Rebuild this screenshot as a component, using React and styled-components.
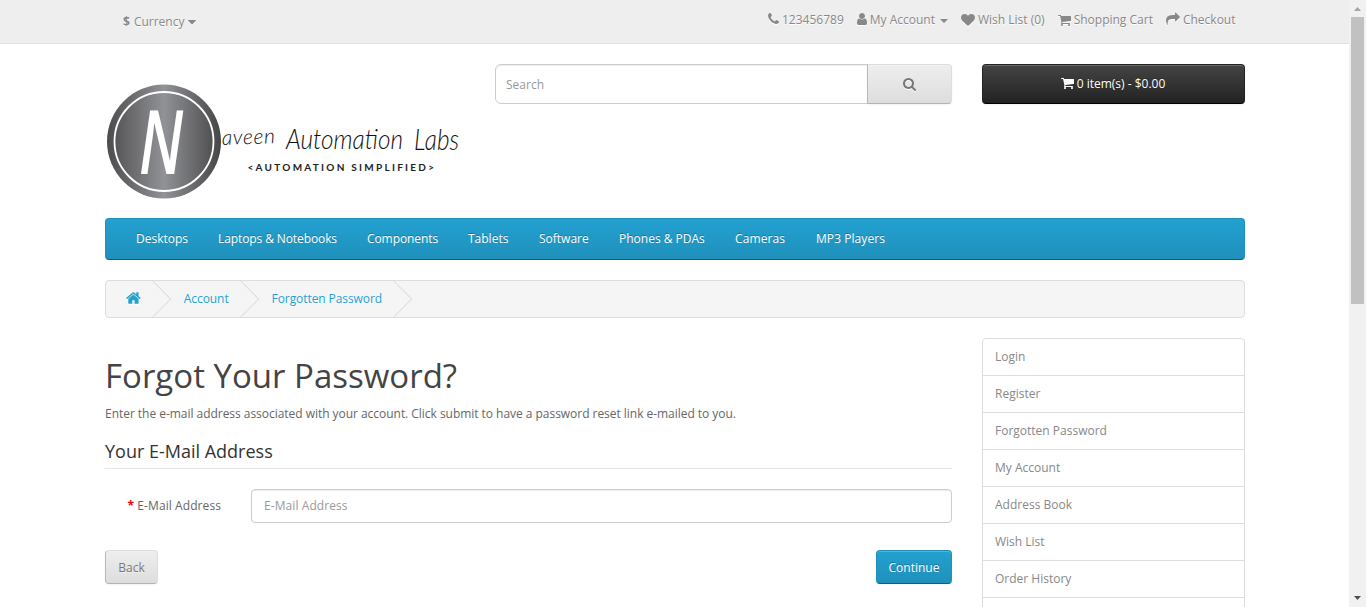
import React from 'react';
import styled, { createGlobalStyle, css } from 'styled-components';

const GlobalStyle = createGlobalStyle`
  *, *::before, *::after { box-sizing: border-box; }
  html, body { margin: 0; padding: 0; height: 100%; overflow: hidden; }
  body {
    font-family: 'Open Sans', sans-serif;
    font-weight: 400;
    font-size: 12px;
    line-height: 20px;
    color: #666;
    background: #fff;
  }
  input, button { font-family: inherit; }
`;

const icons = {
  phone: 'M1600 1240q0 27-10 70.5t-21 68.5q-21 50-122 106-94 51-186 51-27 0-53-3.5t-57.5-12.5-47-14.5-55.5-20.5-49-18q-98-35-175-83-127-79-264-216t-216-264q-48-77-83-175-3-9-18-49t-20.5-55.5-14.5-47-12.5-57.5-3.5-53q0-92 51-186 56-101 106-122 25-11 68.5-21t70.5-10q14 0 21 3 18 6 53 76 11 19 30 54t35 63.5 31 53.5q3 4 17.5 25t21.5 35.5 7 28.5q0 20-28.5 50t-62 55-62 53-28.5 46q0 9 5 22.5t8.5 20.5 14 24 11.5 19q76 137 174 235t235 174q2 1 19 11.5t24 14 20.5 8.5 22.5 5q18 0 46-28.5t53-62 55-62 50-28.5q14 0 28.5 7t35.5 21.5 25 17.5q25 15 53.5 31t63.5 35 54 30q70 35 76 53 3 7 3 21z',
  user: 'M1536 1399q0 109-62.5 187t-150.5 78h-854q-88 0-150.5-78t-62.5-187q0-85 8.5-160.5t31.5-152 58.5-131 94-89 134.5-34.5q131 128 313 128t313-128q76 0 134.5 34.5t94 89 58.5 131 31.5 152 8.5 160.5zm-256-887q0 159-112.5 271.5t-271.5 112.5-271.5-112.5-112.5-271.5 112.5-271.5 271.5-112.5 271.5 112.5 112.5 271.5z',
  heart: 'M896 1664q-26 0-44-18l-624-602q-10-8-27.5-26t-55.5-65.5-68-97.5-53.5-121-23.5-138q0-220 127-344t351-124q62 0 126.5 21.5t120 58 95.5 68.5 76 68q36-36 76-68t95.5-68.5 120-58 126.5-21.5q224 0 351 124t127 344q0 221-229 450l-623 600q-18 18-44 18z',
  cart: 'M704 1536q0 52-38 90t-90 38-90-38-38-90 38-90 90-38 90 38 38 90zm896 0q0 52-38 90t-90 38-90-38-38-90 38-90 90-38 90 38 38 90zm128-1088v512q0 24-16.5 42.5t-40.5 21.5l-1044 122q13 60 13 70 0 16-24 64h920q26 0 45 19t19 45-19 45-45 19h-1024q-26 0-45-19t-19-45q0-11 8-31.5t16-36 21.5-40 15.5-29.5l-177-823h-204q-26 0-45-19t-19-45 19-45 45-19h256q16 0 28.5 6.5t19.5 15.5 13 24.5 8 26 5.5 29.5 4.5 26h1201q26 0 45 19t19 45z',
  share: 'M1792 640q0 26-19 45l-512 512q-19 19-45 19t-45-19-19-45v-256h-224q-98 0-175.5 6t-154 21.5-133 42.5-105.5 69.5-80 101-48.5 138.5-17.5 181q0 55 5 123 0 6 2.5 23.5t2.5 26.5q0 15-8.5 25t-23.5 10q-16 0-28-17-7-9-13-22t-13.5-30-10.5-24q-127-285-127-451 0-199 53-333 162-403 875-403h224v-256q0-26 19-45t45-19 45 19l512 512q19 19 19 45z',
  search: 'M1216 832q0-185-131.5-316.5t-316.5-131.5-316.5 131.5-131.5 316.5 131.5 316.5 316.5 131.5 316.5-131.5 131.5-316.5zm512 832q0 52-38 90t-90 38q-54 0-90-38l-343-342q-179 124-399 124-143 0-273.5-55.5t-225-150-150-225-55.5-273.5 55.5-273.5 150-225 225-150 273.5-55.5 273.5 55.5 225 150 150 225 55.5 273.5q0 220-124 399l343 343q37 37 37 90z',
  home: 'M1472 992v480q0 26-19 45t-45 19h-384v-384h-256v384h-384q-26 0-45-19t-19-45v-480q0-1 .5-3t.5-3l575-474 575 474q1 2 1 6zm223-69l-62 74q-8 9-21 11h-3q-13 0-21-7l-692-577-692 577q-12 8-24 7-13-2-21-11l-62-74q-8-10-7-23.5t11-21.5l719-599q32-26 76-26t76 26l244 204v-195q0-14 9-23t23-9h192q14 0 23 9t9 23v408l219 182q10 8 11 21.5t-7 23.5z',
  caret: 'M1408 704q0 26-19 45l-448 448q-19 19-45 19t-45-19l-448-448q-19-19-19-45t19-45 45-19h896q26 0 45 19t19 45z',
};

const Svg = styled.svg`
  display: block;
  flex: none;
  height: ${(p) => p.$size}px;
  width: ${(p) => p.$w}px;
  margin-bottom: ${(p) => p.$lift || 0}px;
  fill: currentColor;
  filter: ${(p) => (p.$shadow ? 'drop-shadow(0 1px 0 #fff)' : 'none')};
`;

/* box = [left, width] of the glyph inside the 1792-unit em square */
function Icon({ name, size = 14, box = [0, 1792], shadow, lift }) {
  return (
    <Svg
      $size={size}
      $w={(size * box[1]) / 1792}
      $shadow={shadow}
      $lift={lift}
      viewBox={`${box[0]} 0 ${box[1]} 1792`}
      aria-hidden="true"
    >
      <path d={icons[name]} />
    </Svg>
  );
}

const Shell = styled.div`
  display: flex;
  height: 607px;
  overflow: hidden;
`;

const Page = styled.div`
  flex: 1;
  min-width: 0;
`;

const Container = styled.div`
  width: 1140px;
  margin: 0 104px 0 105px;
`;

const TopBar = styled.nav`
  display: flex;
  height: 44px;
  background: #eee;
  border-bottom: 1px solid #e2e2e2;
  margin-bottom: 20px;
  color: #888;
  text-shadow: 0 1px 0 #fff;
`;

const TopInner = styled(Container)`
  display: flex;
  justify-content: space-between;
  align-items: flex-start;
`;

const Currency = styled.div`
  display: flex;
  align-items: center;
  padding: 12px 0 0 18px;
  gap: 4px;
`;

const TopLinks = styled.ul`
  display: flex;
  list-style: none;
  margin: 0;
  padding: 10px 9.5px 0 0;
`;

const TopLink = styled.li`
  display: flex;
  align-items: center;
  gap: 3px;
  margin-left: 13px;
  white-space: nowrap;
`;

const Caret = styled.span`
  margin-left: 2px;
  margin-top: 2px;
  border-top: 4px solid currentColor;
  border-left: 4px solid transparent;
  border-right: 4px solid transparent;
`;

const Header = styled.header`
  display: flex;
  height: 154px;
`;

const LogoCell = styled.div`
  width: 390px;
  padding: 12px 30px 0 0;
`;

const LogoArt = styled.svg`
  display: block;
  width: 360px;
  height: 128px;
  overflow: visible;
`;

const SearchBox = styled.div`
  display: flex;
  width: 457px;
  height: 40px;
  margin-right: 30px;
`;

const Field = styled.input`
  flex: 1;
  min-width: 0;
  font-size: 12px;
  color: #555;
  background: #fff;
  border: 1px solid #ccc;
  box-shadow: inset 0 1px 1px rgba(0, 0, 0, 0.075);
  outline: none;
  &::placeholder { color: #999; opacity: 1; }
  ${(p) =>
    p.$joined
      ? css`
          height: 40px;
          padding: 0 10px;
          border-radius: 6px 0 0 6px;
        `
      : css`
          height: 34px;
          padding: 5px 12px 7px;
          letter-spacing: 0.08px;
          border-radius: 4px;
        `}
`;

const tones = {
  plain: css`
    color: #777;
    text-shadow: 0 1px 0 rgba(255, 255, 255, 0.5);
    background: linear-gradient(to bottom, #eeeeee, #dddddd);
    border-color: #dddddd #dddddd #b3b3b3 #b7b7b7;
  `,
  primary: css`
    color: #fff;
    text-shadow: 0 -1px 0 rgba(0, 0, 0, 0.25);
    background: linear-gradient(to bottom, #23a1d1, #1f90bb);
    border-color: #1f90bb #1f90bb #145e7a;
  `,
  dark: css`
    color: #fff;
    text-shadow: 0 -1px 0 rgba(0, 0, 0, 0.25);
    background: linear-gradient(to bottom, #444444, #222222);
    border-color: #222222 #222222 #000000;
  `,
};

const Button = styled.button`
  display: inline-flex;
  align-items: center;
  justify-content: center;
  gap: 3px;
  width: ${(p) => p.$width}px;
  height: 34px;
  padding: 0;
  margin: 0;
  font-size: 12px;
  line-height: 17px;
  border: 1px solid;
  border-radius: 4px;
  box-shadow: inset 0 1px 0 rgba(255, 255, 255, 0.2), 0 1px 2px rgba(0, 0, 0, 0.05);
  ${(p) => tones[p.$tone]}
`;

const SearchButton = styled(Button)`
  height: 40px;
  margin-left: -1px;
  border-radius: 0 4px 4px 0;
`;

const CartButton = styled(Button)`
  height: 40px;
  padding: 0 1px 2px 0;
`;

const Menu = styled.nav`
  display: flex;
  height: 42px;
  padding-left: 15px;
  margin-bottom: 20px;
  border: 1px solid;
  border-color: #1f90bb #1f90bb #145e7a;
  border-radius: 4px;
  background: linear-gradient(to bottom, #23a1d1, #1f90bb);
  color: #fff;
  text-shadow: 0 -1px 0 rgba(0, 0, 0, 0.25);
`;

const MenuItem = styled.a`
  flex: none;
  width: ${(p) => p.$width}px;
  padding: 10px 0 10px 15px;
  letter-spacing: ${(p) => p.$track || 0}px;
  white-space: nowrap;
`;

const Breadcrumb = styled.ul`
  display: flex;
  gap: 3px;
  height: 38px;
  margin: 0 0 20px;
  padding: 8px 0;
  list-style: none;
  overflow: hidden;
  background: #f5f5f5;
  border: 1px solid #ddd;
  border-radius: 4px;
  color: #23a1d1;
  text-shadow: 0 1px 0 #fff;
`;

const Crumb = styled.li`
  position: relative;
  display: flex;
  align-items: center;
  padding: 0 20px;
  letter-spacing: -0.08px;
  white-space: nowrap;
  &::after {
    content: '';
    position: absolute;
    top: -3px;
    right: -5px;
    width: 26px;
    height: 26px;
    border-right: 1px solid #ddd;
    border-bottom: 1px solid #ddd;
    transform: rotate(-45deg);
  }
`;

const Columns = styled.div`
  display: flex;
  gap: 30px;
`;

const Main = styled.main`
  width: 847px;
`;

const Title = styled.h1`
  margin: 20px 0 10px;
  font-size: 33px;
  font-weight: 400;
  line-height: 36.3px;
  color: #444;
`;

const Intro = styled.p`
  margin: 0 0 10px;
  letter-spacing: -0.035px;
`;

const Legend = styled.h2`
  margin: 0 0 20px;
  padding: 7px 0;
  font-size: 18px;
  font-weight: 400;
  line-height: 20px;
  color: #333;
  border-bottom: 1px solid #e5e5e5;
`;

const FormRow = styled.div`
  display: flex;
  margin-bottom: 27px;
`;

const Label = styled.label`
  width: 116px;
  margin-right: 30px;
  padding-top: 7px;
  letter-spacing: 0.08px;
  text-align: right;
`;

const Required = styled.span`
  color: #f00;
  font-weight: 700;
`;

const Actions = styled.div`
  display: flex;
  justify-content: space-between;
`;

const SideList = styled.aside`
  width: 263px;
  height: 297px;
  border: 1px solid #ddd;
  border-radius: 4px;
  color: #888;
`;

const SideItem = styled.a`
  display: block;
  height: 37px;
  padding: 8px 12px;
  border-bottom: 1px solid #ddd;
`;

const ScrollBar = styled.div`
  display: flex;
  flex-direction: column;
  align-items: center;
  width: 17px;
  height: 607px;
  background: #f1f1f1;
`;

const ScrollArrow = styled.svg`
  display: block;
  flex: none;
  width: 17px;
  height: 17px;
  fill: ${(p) => p.$color};
`;

const Thumb = styled.div`
  width: 13px;
  height: 287px;
  margin-bottom: auto;
  background: #c1c1c1;
`;

function Logo() {
  return (
    <LogoArt viewBox="0 0 360 128" role="img" aria-label="Naveen Automation Labs">
      <defs>
        <linearGradient id="disc" x1="0" x2="1" y1="0" y2="0">
          <stop offset="0" stopColor="#4c4c4d" />
          <stop offset="0.5" stopColor="#919296" />
          <stop offset="1" stopColor="#464647" />
        </linearGradient>
      </defs>
      <circle cx="59" cy="65.5" r="57" fill="url(#disc)" />
      <circle cx="59" cy="65.5" r="49.5" fill="none" stroke="#fff" strokeWidth="1.8" />
      <text
        x="34"
        y="97.500"
        textLength="44"
        lengthAdjust="spacingAndGlyphs"
        fontFamily="'Open Sans', sans-serif"
        fontStyle="italic"
        fontWeight="600"
        fontSize="88"
        fill="#fff"
      >
        N
      </text>
      <g fontFamily="Lato, sans-serif" fontStyle="italic" fontWeight="300" fill="#111">
        <text x="117" y="69" fontSize="21" textLength="53" transform="rotate(-2 117 69)">aveen</text>
        <text x="181" y="73" fontSize="28" textLength="117" lengthAdjust="spacingAndGlyphs">Automation</text>
        <text x="309" y="74" fontSize="30" textLength="45" lengthAdjust="spacingAndGlyphs">Labs</text>
      </g>
      <text
        x="142.500"
        y="94.500"
        textLength="186.500"
        fontFamily="Lato, sans-serif"
        fontWeight="700"
        fontSize="10"
        fill="#222"
      >
        &lt;AUTOMATION SIMPLIFIED&gt;
      </text>
    </LogoArt>
  );
}

const menu = [
  { label: 'Desktops', width: 82 },
  { label: 'Laptops & Notebooks', width: 149, track: -0.1 },
  { label: 'Components', width: 101, track: -0.08 },
  { label: 'Tablets', width: 71 },
  { label: 'Software', width: 80 },
  { label: 'Phones & PDAs', width: 116 },
  { label: 'Cameras', width: 81, track: 0.12 },
  { label: 'MP3 Players', width: 100, track: 0.06 },
];
const account = ['Login', 'Register', 'Forgotten Password', 'My Account', 'Address Book', 'Wish List', 'Order History'];

export default function App() {
  return (
    <>
      <GlobalStyle />
      <Shell>
        <Page>
          <TopBar>
            <TopInner>
              <Currency>
                <strong>$</strong>
                <span>Currency</span>
                <Icon name="caret" box={[384, 1024]} shadow />
              </Currency>
              <TopLinks>
                <TopLink><Icon name="phone" box={[192, 1408]} shadow lift={2} /> 123456789</TopLink>
                <TopLink><Icon name="user" box={[256, 1280]} shadow lift={2} /> My Account <Caret /></TopLink>
                <TopLink><Icon name="heart" shadow lift={1} /> Wish List (0)</TopLink>
                <TopLink><Icon name="cart" box={[64, 1664]} shadow lift={1} /> Shopping Cart</TopLink>
                <TopLink><Icon name="share" shadow lift={2} /> Checkout</TopLink>
              </TopLinks>
            </TopInner>
          </TopBar>
          <Container>
            <Header>
              <LogoCell><Logo /></LogoCell>
              <SearchBox>
                <Field $joined placeholder="Search" />
                <SearchButton $tone="plain" $width={85} aria-label="Search">
                  <Icon name="search" box={[64, 1664]} shadow />
                </SearchButton>
              </SearchBox>
              <CartButton $tone="dark" $width={263}>
                <Icon name="cart" box={[64, 1664]} /> 0 item(s) - $0.00
              </CartButton>
            </Header>
            <Menu>
              {menu.map((m) => (
                <MenuItem key={m.label} $width={m.width} $track={m.track}>{m.label}</MenuItem>
              ))}
            </Menu>
            <Breadcrumb>
              <Crumb><Icon name="home" size={16} box={[64, 1664]} shadow lift={2} /></Crumb>
              <Crumb>Account</Crumb>
              <Crumb>Forgotten Password</Crumb>
            </Breadcrumb>
            <Columns>
              <Main>
                <Title>Forgot Your Password?</Title>
                <Intro>
                  Enter the e-mail address associated with your account. Click submit to have a password reset link e-mailed to you.
                </Intro>
                <Legend>Your E-Mail Address</Legend>
                <FormRow>
                  <Label><Required>* </Required>E-Mail Address</Label>
                  <Field placeholder="E-Mail Address" />
                </FormRow>
                <Actions>
                  <Button $tone="plain" $width={53}>Back</Button>
                  <Button $tone="primary" $width={76}>Continue</Button>
                </Actions>
              </Main>
              <SideList>
                {account.map((a) => <SideItem key={a}>{a}</SideItem>)}
              </SideList>
            </Columns>
          </Container>
        </Page>
        <ScrollBar>
          <ScrollArrow $color="#a3a3a3" viewBox="0 0 17 17"><path d="M5 11 8.500 7 12 11z" /></ScrollArrow>
          <Thumb />
          <ScrollArrow $color="#505050" viewBox="0 0 17 17"><path d="M5 6 8.500 10 12 6z" /></ScrollArrow>
        </ScrollBar>
      </Shell>
    </>
  );
}
